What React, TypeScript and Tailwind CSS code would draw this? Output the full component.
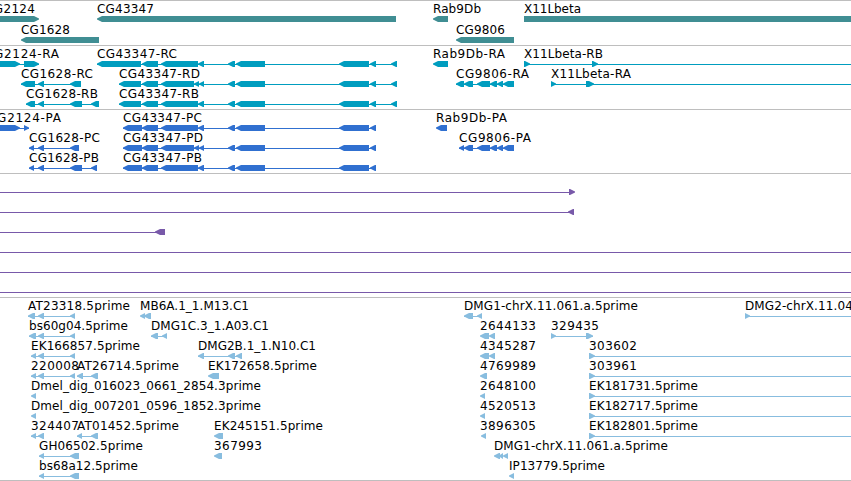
import React from 'react';

type Glyph = { at: [number, number]; dir?: 'left' | 'right' | 'none' };

type Feature = {
    label?: string;
    // label start and end
    text?: [number, number];
    // intron / alignment line
    line?: [number, number];
    glyphs?: Glyph[];
};

type TrackProps = {
    rows: Feature[][];
    className: string;
    rowHeight?: number;
};

const WIDTH = 851;

const L = (...spans: [number, number][]): Glyph[] => spans.map((at) => ({ at, dir: 'left' }));
const R = (...spans: [number, number][]): Glyph[] => spans.map((at) => ({ at, dir: 'right' }));

const cgTail: [number, number][] = [
    [228, 235],
    [236, 265],
    [339, 369],
    [370, 376],
];
const cgHead: [number, number][] = [
    [142, 158],
    [161, 198],
    [198, 204],
];
const cgHeadD: [number, number][] = [
    [142, 158],
    [161, 194],
    [194, 199],
    [199, 204],
];
const cg9806: [number, number][] = [
    [464, 473],
    [477, 490],
    [490, 497],
    [497, 503],
    [503, 514],
];

const genes: Feature[][] = [
    [
        { label: 'CG2124', text: [-15, 35], glyphs: R([-10, 39]) },
        { label: 'CG43347', text: [97, 154], glyphs: L([97, 396]) },
        { label: 'Rab9Db', text: [433, 481], glyphs: L([433, 448]) },
        { label: 'X11Lbeta', text: [524, 581], glyphs: [{ at: [524, 860], dir: 'none' }] },
    ],
    [
        { label: 'CG1628', text: [21, 70], glyphs: L([21, 99]) },
        { label: 'CG9806', text: [456, 505], glyphs: L([456, 514]) },
    ],
];

const transcripts: Feature[][] = [
    [
        { label: 'CG2124-RA', text: [-15, 59], line: [0, 39], glyphs: R([-10, 20], [24, 39]) },
        { label: 'CG43347-RC', text: [97, 177], line: [97, 397], glyphs: L([97, 141], ...cgHead, ...cgTail, [391, 397]) },
        { label: 'Rab9Db-RA', text: [433, 505], glyphs: L([433, 448]) },
        { label: 'X11Lbeta-RB', text: [524, 603], line: [524, WIDTH], glyphs: R([524, 530], [592, 598]) },
    ],
    [
        { label: 'CG1628-RC', text: [21, 93], line: [21, 81], glyphs: L([21, 35], [38, 44], [70, 81]) },
        { label: 'CG43347-RD', text: [119, 200], line: [119, 397], glyphs: L([119, 141], ...cgHeadD, ...cgTail, [391, 397]) },
        { label: 'CG9806-RA', text: [456, 529], line: [456, 514], glyphs: L([456, 464], ...cg9806) },
        { label: 'X11Lbeta-RA', text: [551, 631], line: [551, WIDTH], glyphs: R([551, 556], [586, 594]) },
    ],
    [
        { label: 'CG1628-RB', text: [26, 98], line: [26, 99], glyphs: L([26, 35], [38, 44], [70, 82], [91, 99]) },
        { label: 'CG43347-RB', text: [119, 199], line: [119, 397], glyphs: L([119, 141], ...cgHead, ...cgTail, [391, 397]) },
    ],
];

const proteins: Feature[][] = [
    [
        { label: 'CG2124-PA', text: [-12, 61], line: [0, 29], glyphs: R([-10, 20], [24, 29]) },
        { label: 'CG43347-PC', text: [123, 202], line: [123, 376], glyphs: L([123, 142], ...cgHead, ...cgTail) },
        { label: 'Rab9Db-PA', text: [436, 507], glyphs: L([436, 447]) },
    ],
    [
        { label: 'CG1628-PC', text: [29, 100], line: [29, 79], glyphs: L([29, 34], [38, 44], [70, 79]) },
        { label: 'CG43347-PD', text: [123, 203], line: [123, 376], glyphs: L([123, 142], ...cgHeadD, ...cgTail) },
        { label: 'CG9806-PA', text: [459, 531], line: [459, 514], glyphs: L([459, 464], ...cg9806) },
    ],
    [
        { label: 'CG1628-PB', text: [29, 99], line: [29, 97], glyphs: L([29, 34], [38, 44], [70, 82], [91, 97]) },
        { label: 'CG43347-PB', text: [123, 202], line: [123, 376], glyphs: L([123, 142], ...cgHead, ...cgTail) },
    ],
];

const alignments: Feature[][] = [
    [{ line: [0, 574], glyphs: R([569, 575]) }],
    [{ line: [0, 574], glyphs: L([568, 574]) }],
    [{ line: [0, 165], glyphs: L([155, 165]) }],
    [{ line: [0, WIDTH] }],
    [{ line: [0, WIDTH] }],
    [{ line: [0, WIDTH] }],
];

const ests: Feature[][] = [
    [
        { label: 'AT23318.5prime', text: [28, 130], line: [28, 75], glyphs: L([28, 35], [38, 44], [70, 75]) },
        { label: 'MB6A.1_1.M13.C1', text: [140, 249], glyphs: L([140, 145], [144, 151]) },
        { label: 'DMG1-chrX.11.061.a.5prime', text: [464, 638], line: [464, 482], glyphs: L([464, 473], [477, 482]) },
        { label: 'DMG2-chrX.11.044.a.5prime', text: [745, 919], line: [745, WIDTH], glyphs: R([745, 750]) },
    ],
    [
        { label: 'bs60g04.5prime', text: [29, 128], line: [29, 75], glyphs: L([29, 36], [38, 44], [70, 75]) },
        { label: 'DMG1C.3_1.A03.C1', text: [151, 269], line: [151, 167], glyphs: L([151, 158], [162, 167]) },
        { label: '2644133', text: [480, 536], glyphs: L([480, 489], [489, 495]) },
        { label: '329435', text: [551, 599], line: [551, 593], glyphs: R([551, 556], [586, 593]) },
    ],
    [
        { label: 'EK166857.5prime', text: [31, 140], line: [31, 75], glyphs: L([31, 36], [38, 44], [70, 75]) },
        { label: 'DMG2B.1_1.N10.C1', text: [198, 316], line: [198, 242], glyphs: L([198, 204], [228, 235], [236, 242]) },
        { label: '4345287', text: [480, 536], glyphs: L([480, 489], [489, 495]) },
        { label: '303602', text: [589, 637], line: [589, WIDTH], glyphs: R([589, 595]) },
    ],
    [
        { label: '220008', text: [31, 79], line: [31, 75], glyphs: L([31, 36], [38, 44], [70, 75]) },
        { label: 'AT26714.5prime', text: [77, 179], line: [77, 98], glyphs: L([77, 83], [91, 98]) },
        { label: 'EK172658.5prime', text: [208, 317], glyphs: L([208, 219]) },
        { label: '4769989', text: [480, 536], glyphs: L([480, 487]) },
        { label: '303961', text: [589, 637], line: [589, WIDTH], glyphs: R([589, 595]) },
    ],
    [
        { label: 'Dmel_dig_016023_0661_2854.3prime', text: [31, 261], glyphs: L([31, 36]) },
        { label: '2648100', text: [480, 536], glyphs: L([480, 485]) },
        { label: 'EK181731.5prime', text: [589, 698], line: [589, WIDTH], glyphs: R([589, 595]) },
    ],
    [
        { label: 'Dmel_dig_007201_0596_1852.3prime', text: [31, 261], glyphs: L([31, 36]) },
        { label: '4520513', text: [480, 536], glyphs: L([480, 485]) },
        { label: 'EK182717.5prime', text: [589, 698], line: [589, WIDTH], glyphs: R([589, 595]) },
    ],
    [
        { label: '324407', text: [31, 79], line: [31, 44], glyphs: L([31, 36], [38, 44]) },
        { label: 'AT01452.5prime', text: [77, 179], line: [77, 98], glyphs: L([77, 82], [91, 98]) },
        { label: 'EK245151.5prime', text: [214, 323], glyphs: L([214, 223]) },
        { label: '3896305', text: [480, 536], glyphs: L([481, 486]) },
        { label: 'EK182801.5prime', text: [589, 698], line: [589, WIDTH], glyphs: R([589, 595]) },
    ],
    [
        { label: 'GH06502.5prime', text: [39, 143], line: [39, 79], glyphs: L([39, 44], [70, 79]) },
        { label: '367993', text: [214, 262], glyphs: L([214, 222]) },
        { label: 'DMG1-chrX.11.061.a.5prime', text: [494, 668], glyphs: L([494, 500], [499, 503], [503, 508]) },
    ],
    [
        { label: 'bs68a12.5prime', text: [39, 138], line: [39, 79], glyphs: L([39, 44], [70, 79]) },
        { label: 'IP13779.5prime', text: [509, 605], glyphs: L([509, 514]) },
    ],
];

function arrowPoints({ at: [a, b], dir }: Glyph) {
    if (dir === 'none') return `${a},15 ${b},15 ${b},21 ${a},21`;
    const tip = Math.min(5, b - a);
    if (dir === 'right') {
        return `${a},15 ${b - tip},15 ${b},17.5 ${b},18.5 ${b - tip},21 ${a},21`;
    }
    return `${b},15 ${a + tip},15 ${a},17.5 ${a},18.5 ${a + tip},21 ${b},21`;
}

function Row({ features, height }: { features: Feature[]; height: number }) {
    return (
        <svg width={WIDTH} height={height} overflow="visible" className="block shrink-0 overflow-visible">
            {features.map((f, i) => (
                <g key={i}>
                    {f.line && (
                        <rect x={f.line[0]} y={18} width={f.line[1] - f.line[0]} height={1} fill="currentColor" />
                    )}
                    {f.glyphs?.map((g, j) => (
                        <polygon key={j} points={arrowPoints(g)} fill="currentColor" />
                    ))}
                    {f.label && f.text && (
                        <text
                            x={f.text[0]}
                            y={12}
                            textLength={f.text[1] - f.text[0]}
                            className="fill-black text-[12px]"
                        >
                            {f.label}
                        </text>
                    )}
                </g>
            ))}
        </svg>
    );
}

function Track({ rows, className, rowHeight = 20 }: TrackProps) {
    return (
        <section className={`flex flex-col border-t border-[#bebebe] ${className}`}>
            {rows.map((features, i) => (
                <Row key={i} features={features} height={rowHeight} />
            ))}
        </section>
    );
}

export default function App() {
    return (
        <main className="flex h-[481px] w-[851px] flex-col overflow-hidden border-b border-[#bebebe] bg-white font-['DejaVu_Sans',sans-serif]">
            <Track rows={genes} rowHeight={21} className="pb-0.5 text-[#408e93]" />
            <Track rows={transcripts} className="pb-[3px] text-[#009dbf]" />
            <Track rows={proteins} className="pb-[3px] text-[#3070d0]" />
            <Track rows={alignments} className="pb-[3px] text-[#7859a9]" />
            <Track rows={ests} className="pb-0.5 text-[#88bddf]" />
        </main>
    );
}
